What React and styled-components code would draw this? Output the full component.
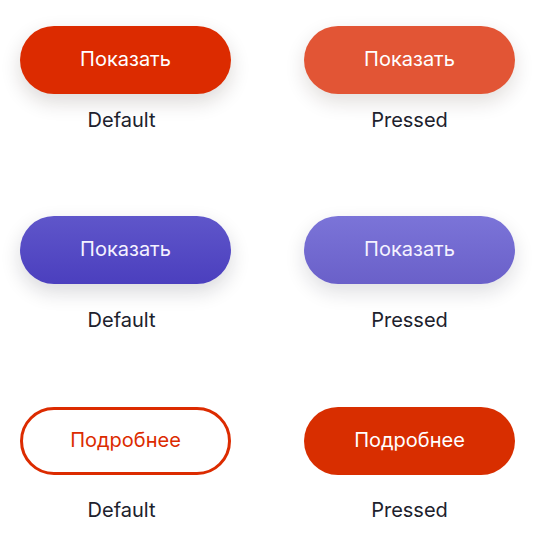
import React from 'react';
import styled, { createGlobalStyle, css } from 'styled-components';

const GlobalStyle = createGlobalStyle`
  html, body {
    margin: 0;
    padding: 0;
    background: #ffffff;
  }
  body {
    font-family: Inter, "Noto Sans", "Liberation Sans", sans-serif;
    -webkit-font-smoothing: antialiased;
  }
`;

const Page = styled.div`
  display: flex;
  flex-direction: column;
  width: 536px;
  padding: 0 21px 0 20px;
  box-sizing: border-box;
`;

const Row = styled.div`
  display: grid;
  grid-template-columns: 211px 211px;
  column-gap: 73px;
  margin-top: ${(p) => p.$top}px;
`;

const Cell = styled.div`
  display: flex;
  flex-direction: column;
  align-items: center;
  gap: ${(p) => p.$gap}px;
`;

const variants = {
  red: css`
    background: #dc2b00;
    color: #ffffff;
    box-shadow: 0 8px 20px rgba(40, 20, 10, 0.16);
  `,
  redPressed: css`
    background: #e25535;
    color: #ffffff;
    box-shadow: 0 8px 20px rgba(40, 20, 10, 0.14);
  `,
  violet: css`
    background: linear-gradient(180deg, #5f56ca 0%, #4b3fbe 100%);
    color: #f4f2ff;
    box-shadow: 0 8px 20px rgba(20, 20, 40, 0.16);
  `,
  violetPressed: css`
    background: linear-gradient(180deg, #7b74d8 0%, #6a60c9 100%);
    color: #f4f2ff;
    box-shadow: 0 8px 20px rgba(20, 20, 40, 0.14);
  `,
  outline: css`
    background: #ffffff;
    color: #dc2b00;
    border: 3px solid #dc2b00;
  `,
  solid: css`
    background: #d82e00;
    color: #ffffff;
  `,
};

const Button = styled.button`
  display: flex;
  align-items: center;
  justify-content: center;
  width: 211px;
  height: 68px;
  box-sizing: border-box;
  border: none;
  border-radius: 34px;
  padding: 0 0 2px;
  font-family: inherit;
  font-size: 20px;
  font-weight: 400;
  cursor: pointer;
  ${(p) => variants[p.$variant]}
`;

const Caption = styled.div`
  font-size: 20px;
  line-height: 24px;
  color: #20212c;
  margin-right: ${(p) => (p.$left ? 8 : 0)}px;
`;

const rows = [
  { top: 26, gap: 14, label: 'Показать', variants: ['red', 'redPressed'] },
  { top: 84, gap: 24, label: 'Показать', variants: ['violet', 'violetPressed'] },
  { top: 75, gap: 23, label: 'Подробнее', variants: ['outline', 'solid'] },
];

export default function App() {
  return (
    <>
      <GlobalStyle />
      <Page>
        {rows.map((row, i) => (
          <Row key={i} $top={row.top}>
            <Cell $gap={row.gap}>
              <Button $variant={row.variants[0]}>{row.label}</Button>
              <Caption $left>Default</Caption>
            </Cell>
            <Cell $gap={row.gap}>
              <Button $variant={row.variants[1]}>{row.label}</Button>
              <Caption>Pressed</Caption>
            </Cell>
          </Row>
        ))}
      </Page>
    </>
  );
}
